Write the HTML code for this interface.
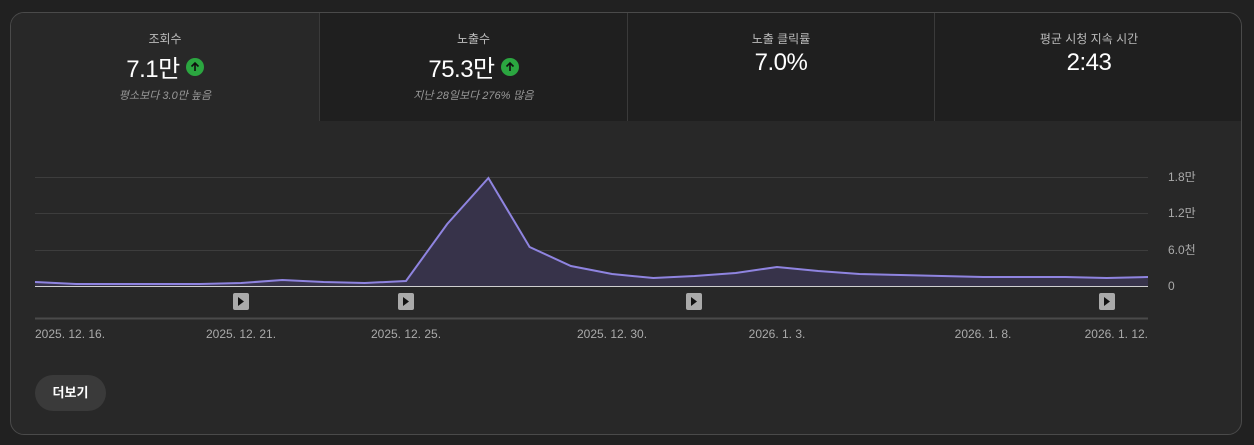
<!DOCTYPE html>
<html><head><meta charset="utf-8"><style>
*{margin:0;padding:0;box-sizing:border-box}
body{width:1254px;height:445px;background:#212121;font-family:"Liberation Sans","Noto Sans CJK KR",sans-serif;position:relative;overflow:hidden}
.card{position:absolute;left:10px;top:12px;width:1232px;height:423px;border:1px solid #4a4a4a;border-radius:14px;background:#282828;overflow:hidden}
.tab{position:absolute;top:0;height:108px;text-align:center;color:#fff;background:#1f1f1f;border-left:1px solid #3a3a3a}
.tab .t{position:absolute;top:17px;width:100%;font-size:12px;color:#bbb}
.tab .v{position:absolute;top:36px;width:100%;font-size:24px;color:#fff;display:flex;justify-content:center;align-items:center;gap:6px;letter-spacing:-0.5px}
.tab .s{position:absolute;top:74px;width:100%;font-size:11px;font-style:italic;color:#999}
.up{width:18px;height:18px;border-radius:50%;background:#2ba640;display:inline-block;position:relative}
.up svg{position:absolute;left:3px;top:3px}
.btn{position:absolute;left:24px;top:362px;width:71px;height:36px;border-radius:18px;background:#3a3a3a;color:#fff;font-weight:bold;font-size:13px;text-align:center;line-height:36px}
</style></head><body>
<div class="card">
<div class="tab" style="left:0;width:308px;background:#282828;border-left:none">
<div class="t">조회수</div>
<div class="v">7.1만<span class="up"><svg width="12" height="12" viewBox="0 0 12 12"><path d="M6 10V2M2.5 5.5L6 2l3.5 3.5" stroke="#0f0f0f" stroke-width="1.6" fill="none"/></svg></span></div>
<div class="s">평소보다 3.0만 높음</div></div>
<div class="tab" style="left:308px;width:308px">
<div class="t">노출수</div>
<div class="v">75.3만<span class="up"><svg width="12" height="12" viewBox="0 0 12 12"><path d="M6 10V2M2.5 5.5L6 2l3.5 3.5" stroke="#0f0f0f" stroke-width="1.6" fill="none"/></svg></span></div>
<div class="s">지난 28일보다 276% 많음</div></div>
<div class="tab" style="left:616px;width:307px">
<div class="t">노출 클릭률</div>
<div class="v">7.0%</div></div>
<div class="tab" style="left:923px;width:309px">
<div class="t">평균 시청 지속 시간</div>
<div class="v">2:43</div></div>
<div class="btn">더보기</div>
</div>
<svg style="position:absolute;left:0;top:0" width="1254" height="445">
<g stroke="#3d3d3d" stroke-width="1"><line x1="35" y1="177.5" x2="1148" y2="177.5"/><line x1="35" y1="213.5" x2="1148" y2="213.5"/><line x1="35" y1="250.5" x2="1148" y2="250.5"/></g>
<polygon fill="#37334a" points="35,286 35,282 76.2,284 117.4,284 158.7,284 199.9,284 241.1,283 282.3,280 323.5,282 364.8,283 406,281 447.2,224 488.4,178 529.6,247 570.9,266 612.1,274 653.3,278 694.5,276 735.7,273 777,267 818.2,271 859.4,274 900.6,275 941.8,276 983.1,277 1024.3,277 1065.5,277 1106.7,278 1148,277 1148,286"/>
<line x1="35" y1="286.5" x2="1148" y2="286.5" stroke="#cfcfcf" stroke-width="1"/>
<polyline fill="none" stroke="#8f84e0" stroke-width="2" points="35,282 76.2,284 117.4,284 158.7,284 199.9,284 241.1,283 282.3,280 323.5,282 364.8,283 406,281 447.2,224 488.4,178 529.6,247 570.9,266 612.1,274 653.3,278 694.5,276 735.7,273 777,267 818.2,271 859.4,274 900.6,275 941.8,276 983.1,277 1024.3,277 1065.5,277 1106.7,278 1148,277"/>
<line x1="35" y1="318.5" x2="1148" y2="318.5" stroke="#4a4a4a" stroke-width="2"/>
<g fill="#aaa"><rect x="233" y="293" width="16" height="17" rx="2"/><rect x="398" y="293" width="16" height="17" rx="2"/><rect x="686" y="293" width="16" height="17" rx="2"/><rect x="1099" y="293" width="16" height="17" rx="2"/></g>
<g fill="#111"><path d="M238 297v9l6-4.5z"/><path d="M403 297v9l6-4.5z"/><path d="M691 297v9l6-4.5z"/><path d="M1104 297v9l6-4.5z"/></g>
<g font-family="Liberation Sans,Noto Sans CJK KR,sans-serif" font-size="12" fill="#aaa">
<text x="35" y="338">2025. 12. 16.</text>
<text x="241" y="338" text-anchor="middle">2025. 12. 21.</text>
<text x="406" y="338" text-anchor="middle">2025. 12. 25.</text>
<text x="612" y="338" text-anchor="middle">2025. 12. 30.</text>
<text x="777" y="338" text-anchor="middle">2026. 1. 3.</text>
<text x="983" y="338" text-anchor="middle">2026. 1. 8.</text>
<text x="1148" y="338" text-anchor="end">2026. 1. 12.</text>
<text x="1168" y="181">1.8만</text>
<text x="1168" y="217">1.2만</text>
<text x="1168" y="254">6.0천</text>
<text x="1168" y="290">0</text>
</g>
</svg>
</body></html>
